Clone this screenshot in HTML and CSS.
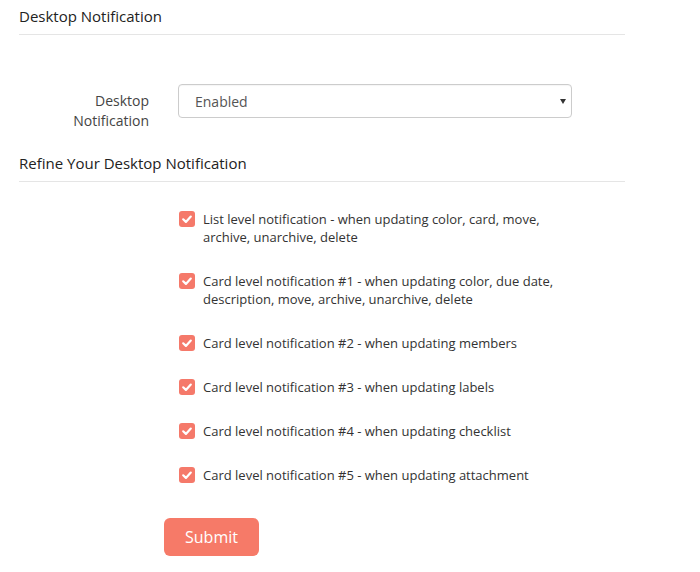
FILE: index.html
```html
<!DOCTYPE html>
<html>
<head>
<meta charset="utf-8">
<link rel="stylesheet" href="styles.css">
</head>
<body>
<div class="page">
  <h3 class="section-title first">Desktop Notification</h3>
  <div class="form-row">
    <label class="form-label" for="dn">Desktop<br>Notification</label>
    <div class="select-wrap">
      <select id="dn" class="form-select">
        <option>Enabled</option>
        <option>Disabled</option>
      </select>
    </div>
  </div>
  <h3 class="section-title second">Refine Your Desktop Notification</h3>
  <ul class="check-list">
    <li class="check-item"><span class="box"><svg viewBox="0 0 16 16" width="16" height="16"><path d="M4.2 8.3 L6.9 10.9 L11.8 5.6" fill="none" stroke="#fff" stroke-width="2.2" stroke-linecap="round" stroke-linejoin="round"/></svg></span><span class="check-text">List level notification - when updating color, card, move,<br>archive, unarchive, delete</span></li>
    <li class="check-item"><span class="box"><svg viewBox="0 0 16 16" width="16" height="16"><path d="M4.2 8.3 L6.9 10.9 L11.8 5.6" fill="none" stroke="#fff" stroke-width="2.2" stroke-linecap="round" stroke-linejoin="round"/></svg></span><span class="check-text">Card level notification #1 - when updating color, due date,<br>description, move, archive, unarchive, delete</span></li>
    <li class="check-item"><span class="box"><svg viewBox="0 0 16 16" width="16" height="16"><path d="M4.2 8.3 L6.9 10.9 L11.8 5.6" fill="none" stroke="#fff" stroke-width="2.2" stroke-linecap="round" stroke-linejoin="round"/></svg></span><span class="check-text">Card level notification #2 - when updating members</span></li>
    <li class="check-item"><span class="box"><svg viewBox="0 0 16 16" width="16" height="16"><path d="M4.2 8.3 L6.9 10.9 L11.8 5.6" fill="none" stroke="#fff" stroke-width="2.2" stroke-linecap="round" stroke-linejoin="round"/></svg></span><span class="check-text">Card level notification #3 - when updating labels</span></li>
    <li class="check-item"><span class="box"><svg viewBox="0 0 16 16" width="16" height="16"><path d="M4.2 8.3 L6.9 10.9 L11.8 5.6" fill="none" stroke="#fff" stroke-width="2.2" stroke-linecap="round" stroke-linejoin="round"/></svg></span><span class="check-text">Card level notification #4 - when updating checklist</span></li>
    <li class="check-item"><span class="box"><svg viewBox="0 0 16 16" width="16" height="16"><path d="M4.2 8.3 L6.9 10.9 L11.8 5.6" fill="none" stroke="#fff" stroke-width="2.2" stroke-linecap="round" stroke-linejoin="round"/></svg></span><span class="check-text">Card level notification #5 - when updating attachment</span></li>
  </ul>
  <button class="submit-btn" type="button">Submit</button>
</div>
</body>
</html>
```
FILE: styles.css
```css
* { box-sizing: border-box; }
html, body { margin: 0; padding: 0; background: #fff; }
body {
  font-family: "Open Sans", "DejaVu Sans", sans-serif;
  color: #333;
}
.page {
  width: 606px;
  margin-left: 19px;
}
.section-title {
  margin: 0;
  font-size: 15px;
  font-weight: 500;
  line-height: 20px;
  color: #222;
  border-bottom: 1px solid #e5e5e5;
}
.section-title.first { padding: 6px 0 8px; }
.section-title.second { margin-top: 22px; padding: 0 0 8px; }
.form-row {
  display: flex;
  align-items: flex-start;
  margin-top: 49px;
}
.form-label {
  width: 130px;
  text-align: right;
  font-size: 14px;
  line-height: 20px;
  color: #444;
  padding-top: 7px;
  margin-right: 29px;
}
.select-wrap {
  position: relative;
  width: 394px;
}
.select-wrap::after {
  content: "";
  position: absolute;
  right: 6px;
  top: 15px;
  border-left: 3px solid transparent;
  border-right: 3px solid transparent;
  border-top: 5px solid #333;
  pointer-events: none;
}
.form-select {
  appearance: none;
  -webkit-appearance: none;
  display: block;
  width: 100%;
  height: 34px;
  padding: 0 16px;
  font-family: "Open Sans", "DejaVu Sans", sans-serif;
  font-size: 14px;
  color: #555;
  background: #fff;
  border: 1px solid #ccc;
  border-radius: 4px;
  box-shadow: inset 0 1px 1px rgba(0,0,0,0.04);
}
.check-list {
  list-style: none;
  margin: 28px 0 0 160px;
  padding: 0;
}
.check-item {
  display: flex;
  align-items: flex-start;
  margin-bottom: 26px;
}
.check-item:last-child { margin-bottom: 0; }
.box {
  flex: none;
  width: 16px;
  height: 16px;
  margin-top: 1px;
  margin-right: 8px;
  border-radius: 3px;
  background: #f5796a;
  display: flex;
}
.check-text {
  font-size: 13px;
  line-height: 18px;
  color: #333;
}
.submit-btn {
  display: block;
  margin: 34px 0 0 145px;
  width: 95px;
  height: 38px;
  border: none;
  border-radius: 6px;
  background: #f67a68;
  color: #fff;
  font-family: "Open Sans", "DejaVu Sans", sans-serif;
  font-size: 16px;
  cursor: pointer;
}
```
